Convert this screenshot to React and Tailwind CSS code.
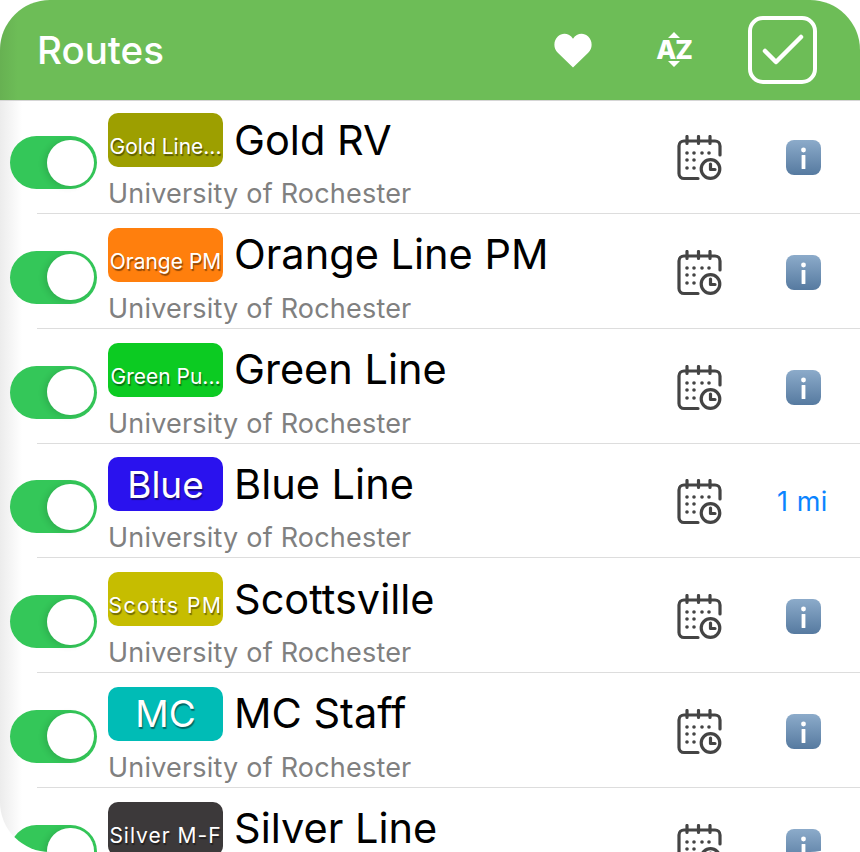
const FONT = "font-['Inter','Liberation_Sans',sans-serif]";

const rows = [
  { badge: "Gold Line...", color: "bg-[#9d9f00]", size: "text-[21px] pt-[14px] tracking-[0px]", title: "Gold RV" },
  { badge: "Orange PM", color: "bg-[#ff7f0d]", size: "text-[21px] pt-[14px] tracking-[0px]", title: "Orange Line PM" },
  { badge: "Green Pu...", color: "bg-[#0ccb22]", size: "text-[21px] pt-[14px] tracking-[0px]", title: "Green Line" },
  { badge: "Blue", color: "bg-[#2a12ee]", size: "text-[37px]", title: "Blue Line", distance: "1 mi" },
  { badge: "Scotts PM", color: "bg-[#c6bd00]", size: "text-[21px] pt-[14px] tracking-[1.5px]", title: "Scottsville" },
  { badge: "MC", color: "bg-[#00bcb6]", size: "text-[37px]", title: "MC Staff" },
  { badge: "Silver M-F", color: "bg-[#3c393a]", size: "text-[21px] pt-[14px] tracking-[1px]", title: "Silver Line" },
];

function Toggle() {
  return (
    <div className="mt-[36px] flex h-[53px] w-[87px] shrink-0 items-center justify-end rounded-full bg-[#34c759] pr-[3px]">
      <div className="h-[46px] w-[47px] rounded-full bg-white shadow-[-3px_1px_6px_rgba(0,0,0,0.12)]" />
    </div>
  );
}

function CalendarIcon() {
  return (
    <svg width="46" height="46" viewBox="0 0 46 46" fill="none" className="mt-[35px] shrink-0">
      <g stroke="#444444" strokeWidth="3.2" strokeLinecap="round" strokeLinejoin="round">
        <path d="M21 43.5H7a5 5 0 0 1-5-5V11a5 5 0 0 1 5-5h31a5 5 0 0 1 5 5v9" />
        <path d="M10 1.5v7M21.5 1.5v7M33 1.5v7" />
        <circle cx="33.5" cy="34" r="9.3" />
        <path d="M33.5 29v5.5h4.5" />
      </g>
      <g fill="#444444">
        <circle cx="10" cy="18" r="1.8" /><circle cx="17" cy="18" r="1.8" /><circle cx="25" cy="18" r="1.8" /><circle cx="32" cy="18" r="1.8" />
        <circle cx="10" cy="25" r="1.8" /><circle cx="17" cy="25" r="1.8" />
        <circle cx="10" cy="33" r="1.8" /><circle cx="17" cy="33" r="1.8" />
      </g>
    </svg>
  );
}

function InfoIcon() {
  return (
    <svg width="35" height="35" viewBox="0 0 35 35" className="mt-[40px]">
      <defs>
        <linearGradient id="infoGrad" x1="0" y1="0" x2="0" y2="1">
          <stop offset="0" stopColor="#8cabca" />
          <stop offset="1" stopColor="#567aa0" />
        </linearGradient>
      </defs>
      <rect x="0" y="0" width="35" height="35" rx="8" fill="url(#infoGrad)" />
      <circle cx="17.5" cy="10" r="2.4" fill="#fff" />
      <rect x="15.6" y="15" width="3.8" height="14" rx="0.5" fill="#fff" />
    </svg>
  );
}

function Row({ row }) {
  return (
    <div className="flex h-[114.75px] shrink-0 flex-col">
      <div className="flex h-[113px] shrink-0 pl-[10px]">
        <Toggle />
        <div className="ml-[11px] w-[569px] shrink-0 pt-[13px]">
          <div className="flex h-[54px] items-center">
            <div
              className={`flex h-[54px] w-[115px] shrink-0 items-center justify-center overflow-hidden rounded-[10px] whitespace-nowrap text-white [text-shadow:1px_2px_1px_rgba(0,0,0,0.45)] ${row.color} ${row.size}`}
            >
              {row.badge}
            </div>
            <div className="ml-[11px] -mt-[1px] text-[41.5px] leading-[54px] whitespace-nowrap text-black">{row.title}</div>
          </div>
          <div className="mt-[11px] text-[27px] leading-[32px] tracking-[0.2px] whitespace-nowrap text-[#808080]">
            University of Rochester
          </div>
        </div>
        <CalendarIcon />
        <div className="ml-[50px] flex w-[60px] shrink-0 justify-center">
          {row.distance ? (
            <div className="mt-[42px] pr-[1px] text-[27px] leading-[32px] tracking-[0.5px] whitespace-nowrap text-[#0a84ff]">{row.distance}</div>
          ) : (
            <InfoIcon />
          )}
        </div>
      </div>
      <div className="ml-[37px] h-px shrink-0 bg-[#dddddd]" />
    </div>
  );
}

export default function App() {
  return (
    <div className={`h-[852px] w-[860px] overflow-hidden rounded-[50px] bg-[linear-gradient(90deg,#ececec_0px,#ffffff_22px)] ${FONT}`}>
      <div className="-mb-px flex h-[101px] items-center border-b border-[#d6d6d6] bg-[linear-gradient(90deg,#67b152_0px,#6dbd57_18px)] pr-[43px] pl-[37px]">
        <div className="text-[38.5px] leading-none font-medium text-white">Routes</div>
        <svg width="38" height="35" viewBox="0 0 38 35" className="ml-auto shrink-0">
          <path fill="#fff" d="M19 34.5 3.8 19.8C-1 15-.5 7.6 3.8 3.5 8.6-1 15.5.3 19 5.8 22.5.3 29.4-1 34.2 3.5 38.5 7.6 39 15 34.2 19.8Z" />
        </svg>
        <div className="relative ml-[63px] flex h-[38px] w-[38px] shrink-0 items-center justify-center">
          <span className="text-[26px] leading-none font-extrabold tracking-[-1px] text-white">AZ</span>
          <svg width="18" height="38" viewBox="0 0 18 38" className="absolute top-0 left-[10px]">
            <path fill="#fff" d="M9 1l6 6H3zM9 36l-6-6h12z" />
          </svg>
        </div>
        <div className="ml-[55px] flex h-[68px] w-[69px] shrink-0 items-center justify-center rounded-[15px] border-[4.5px] border-white">
          <svg width="42" height="32" viewBox="0 0 42 32" fill="none">
            <path d="M3 17 14 28 39 3" stroke="#fff" strokeWidth="4.5" strokeLinecap="round" strokeLinejoin="round" />
          </svg>
        </div>
      </div>
      {rows.map((row) => (
        <Row key={row.title} row={row} />
      ))}
    </div>
  );
}
